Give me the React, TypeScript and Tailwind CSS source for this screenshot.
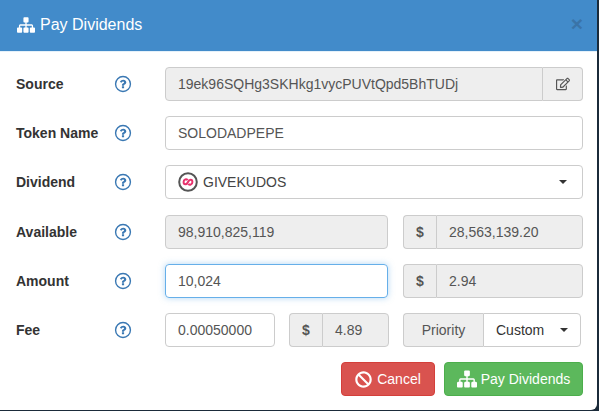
import { FaBan, FaRegEdit } from "react-icons/fa";

const inputCls = "h-[34px] border border-[#ccc] rounded-[4px] px-3 flex items-center text-[14px] text-[#555] min-w-0";
const readOnly = "bg-[#eee]";

function SitemapIcon({ size }: { size: number }) {
  return (
    <svg width={size} height={size} viewBox="0 0 1792 1792" fill="currentColor" className="shrink-0">
      <path d="M1792 1248v320q0 40-28 68t-68 28h-320q-40 0-68-28t-28-68v-320q0-40 28-68t68-28h96v-192h-512v192h96q40 0 68 28t28 68v320q0 40-28 68t-68 28h-320q-40 0-68-28t-28-68v-320q0-40 28-68t68-28h96v-192h-512v192h96q40 0 68 28t28 68v320q0 40-28 68t-68 28h-320q-40 0-68-28t-28-68v-320q0-40 28-68t68-28h96v-192q0-52 38-90t90-38h512v-192h-96q-40 0-68-28t-28-68v-320q0-40 28-68t68-28h320q40 0 68 28t28 68v320q0 40-28 68t-68 28h-96v192h512q52 0 90 38t38 90v192h96q40 0 68 28t28 68z" />
    </svg>
  );
}

function Help() {
  return (
    <div className="w-[149px] shrink-0 flex items-center">
      <svg width="18" height="18" viewBox="0 0 1792 1792" fill="currentColor" className="ml-[98px] text-[#3a78b3]">
        <circle cx="896" cy="896" r="740" fill="none" stroke="currentColor" strokeWidth="140" />
        <g transform="translate(896 896) scale(0.85) translate(-896 -896)">
          <path d="M1024 1376v-192q0-14-9-23t-23-9h-192q-14 0-23 9t-9 23v192q0 14 9 23t23 9h192q14 0 23-9t9-23zm256-672q0-88-55.5-163t-138.5-116-170-41q-243 0-371 213-15 24 8 42l132 100q7 6 19 6 16 0 25-12 53-68 86-92 34-24 86-24 48 0 85.5 26t37.5 59q0 38-20 61t-68 45q-63 28-115.5 86.5t-52.5 125.5v36q0 14 9 23t23 9h192q14 0 23-9t9-23q0-19 21.5-49.5t54.5-49.5q32-18 49-28.5t46-35 44.5-48 28-60.5 12.5-81z" />
        </g>
      </svg>
    </div>
  );
}

function Row({ label, className = "", children }: { label: string; className?: string; children: React.ReactNode }) {
  return (
    <div className={`flex items-center h-[34px] ${className}`}>
      <div className="w-[100px] shrink-0 -mr-[100px] z-10 font-bold text-[14px] text-[#333]">{label}</div>
      <Help />
      <div className="flex-1 flex min-w-0">{children}</div>
    </div>
  );
}

function DollarGroup({ value, className }: { value: string; className: string }) {
  return (
    <div className={`flex ${className}`}>
      <div className="w-[33px] h-[34px] shrink-0 border border-r-0 border-[#ccc] rounded-l-[4px] bg-[#eee] flex items-center justify-center text-[14px] font-bold text-[#555]">$</div>
      <div className={`${inputCls} ${readOnly} flex-1 rounded-l-none`}>{value}</div>
    </div>
  );
}

function Caret() {
  return <span className="w-0 h-0 border-x-[4px] border-x-transparent border-t-[4px] border-t-[#333]" />;
}

export default function App() {
  return (
    <div className="w-[599px] h-[411px] bg-[#1b2b3a] overflow-hidden font-['Liberation_Sans',Arial,sans-serif]">
      <div className="w-[597px] h-[410px] bg-white rounded-br-[6px]">
        <div className="h-[52px] bg-[#428bca] border-b border-b-[#e5f1fa] pl-[17px] pr-[14px] flex items-center justify-between">
          <div className="flex items-center gap-[5px] text-white text-[16px] -mt-[1px]">
            <SitemapIcon size={18} />
            <span>Pay Dividends</span>
          </div>
          <span className="text-[21px] font-bold leading-none text-[#3a74a8] -mt-[5px]">×</span>
        </div>
        <div className="pt-[15px] pl-[16px] pr-[14px] flex flex-col gap-[15px]">
          <Row label="Source">
            <div className={`${inputCls} ${readOnly} flex-1 rounded-r-none`}>19ek96SQHg3SKHkg1vycPUVtQpd5BhTUDj</div>
            <div className="w-[40px] h-[34px] shrink-0 border border-l-0 border-[#ccc] rounded-r-[4px] bg-[#eee] flex items-center justify-center text-[#555] text-[14px]">
              <FaRegEdit />
            </div>
          </Row>
          <Row label="Token Name">
            <div className={`${inputCls} flex-1`}>SOLODADPEPE</div>
          </Row>
          <Row label="Dividend">
            <div className={`${inputCls} flex-1 justify-between !text-[#444]`}>
              <div className="flex items-center gap-[5px]">
                <svg width="20" height="20" viewBox="0 0 20 20">
                  <circle cx="10" cy="10" r="8.8" fill="#fff" stroke="#555" strokeWidth="2" />
                  <path d="M9.6 8.2 C8.6 6.8 5.6 7 5.6 10 C5.6 13 8.6 13.2 10 10 C11.4 6.8 14.4 7 14.4 10 C14.4 13 11.4 13.2 10.4 11.8" fill="none" stroke="#e8336d" strokeWidth="2" />
                </svg>
                <span>GIVEKUDOS</span>
              </div>
              <span className="mr-[3px] flex"><Caret /></span>
            </div>
          </Row>
          <Row label="Available" className="mt-[1px]">
            <div className={`${inputCls} ${readOnly} w-[223px] shrink-0`}>98,910,825,119</div>
            <DollarGroup value="28,563,139.20" className="ml-[15px] flex-1" />
          </Row>
          <Row label="Amount">
            <div className={`${inputCls} w-[223px] shrink-0 !border-[#66afe9] shadow-[0_0_6px_rgba(102,175,233,0.5)]`}>10,024</div>
            <DollarGroup value="2.94" className="ml-[15px] flex-1" />
          </Row>
          <Row label="Fee">
            <div className={`${inputCls} w-[110px] shrink-0`}>0.00050000</div>
            <DollarGroup value="4.89" className="ml-[14px] w-[100px] shrink-0" />
            <div className="ml-[14px] flex w-[178px] shrink-0">
              <div className="w-[80px] h-[34px] border border-r-0 border-[#ccc] rounded-l-[4px] bg-[#eee] flex items-center justify-center text-[14px] text-[#555]">Priority</div>
              <div className="flex-1 h-[34px] border border-[#ccc] rounded-r-[4px] pl-[12px] pr-[12px] flex items-center justify-between text-[14px] text-[#333]">
                <span>Custom</span>
                <Caret />
              </div>
            </div>
          </Row>
          <div className="flex justify-end gap-[9px]">
            <button className="w-[94px] h-[34px] rounded-[4px] bg-[#d9534f] border border-[#d43f3a] text-white text-[14px] flex items-center justify-center gap-[5px]">
              <FaBan className="text-[17px]" />
              Cancel
            </button>
            <button className="w-[139px] h-[34px] rounded-[4px] bg-[#5cb85c] border border-[#4cae4c] text-white text-[14px] flex items-center justify-center gap-[4px]">
              <SitemapIcon size={20} />
              Pay Dividends
            </button>
          </div>
        </div>
      </div>
    </div>
  );
}
